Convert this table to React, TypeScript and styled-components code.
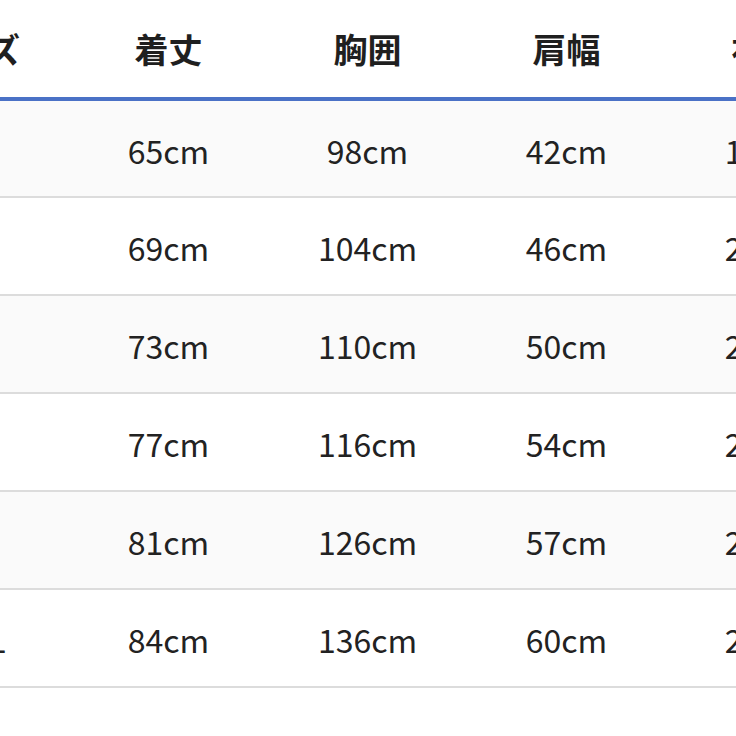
import styled, { createGlobalStyle } from "styled-components";

const GlobalStyle = createGlobalStyle`
  html, body {
    margin: 0;
    padding: 0;
    background: #ffffff;
    overflow: hidden;
  }
`;

const Viewport = styled.div`
  width: 736px;
  height: 736px;
  overflow: hidden;
  background: #ffffff;
`;

const Table = styled.table`
  margin-left: -130px;
  width: 995px;
  table-layout: fixed;
  border-collapse: collapse;
  font-family: "Noto Sans CJK JP", "Noto Sans", sans-serif;
  color: #222222;
`;

const HeadCell = styled.th`
  width: 199px;
  height: 97px;
  padding: 0;
  text-align: center;
  vertical-align: middle;
  font-size: 34px;
  font-weight: 700;
  color: #1f1f1f;
  border-bottom: 4px solid #4a71c6;
`;

const Row = styled.tr<{ $shaded: boolean }>`
  background: ${(props) => (props.$shaded ? "#fafafa" : "#ffffff")};
  border-bottom: 2px solid #dcdcdc;
`;

const Cell = styled.td`
  height: 98px;
  padding: 2px 0 0;
  text-align: center;
  vertical-align: middle;
  font-size: 32px;
  font-weight: 400;
  line-height: 1;
  box-sizing: border-box;
`;

interface ISize {
  size: string;
  length: number;
  chest: number;
  shoulder: number;
  sleeve: number;
}

const headers = ["サイズ", "着丈", "胸囲", "肩幅", "袖丈"];

const sizes: ISize[] = [
  { size: "S", length: 65, chest: 98, shoulder: 42, sleeve: 19 },
  { size: "M", length: 69, chest: 104, shoulder: 46, sleeve: 20 },
  { size: "L", length: 73, chest: 110, shoulder: 50, sleeve: 21 },
  { size: "XL", length: 77, chest: 116, shoulder: 54, sleeve: 22 },
  { size: "XXL", length: 81, chest: 126, shoulder: 57, sleeve: 23 },
  { size: "XXXL", length: 84, chest: 136, shoulder: 60, sleeve: 24 },
];

function App() {
  return (
    <Viewport>
      <GlobalStyle />
      <Table>
        <thead>
          <tr>
            {headers.map((label) => (
              <HeadCell key={label}>{label}</HeadCell>
            ))}
          </tr>
        </thead>
        <tbody>
          {sizes.map((row, index) => (
            <Row key={row.size} $shaded={index % 2 === 0}>
              <Cell>{row.size}</Cell>
              <Cell>{row.length}cm</Cell>
              <Cell>{row.chest}cm</Cell>
              <Cell>{row.shoulder}cm</Cell>
              <Cell>{row.sleeve}cm</Cell>
            </Row>
          ))}
        </tbody>
      </Table>
    </Viewport>
  );
}

export default App;
